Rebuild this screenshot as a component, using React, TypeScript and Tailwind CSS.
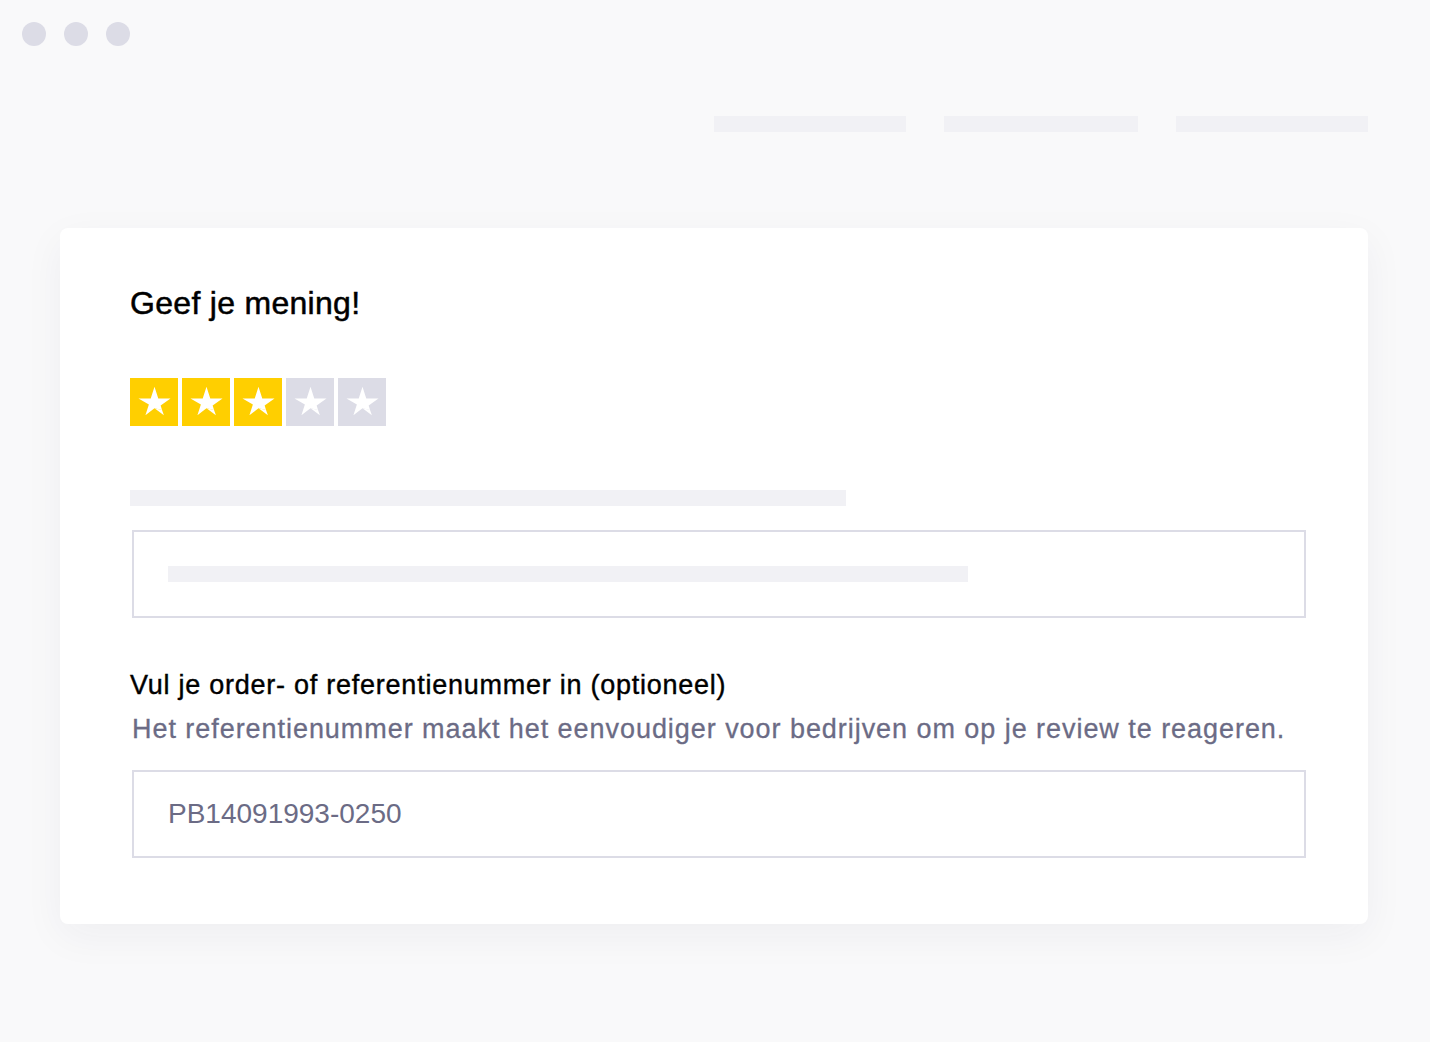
import React from "react";

const font = { fontFamily: '"Liberation Sans", Arial, sans-serif' };

function Star({ on }: { on: boolean }) {
  return (
    <div className={`flex h-[48px] w-[48px] items-center justify-center ${on ? "bg-[#ffcf00]" : "bg-[#dcdce6]"}`}>
      <svg width="37" height="37" viewBox="0 0 24 24">
        <path d="M12 1.8 L14.45 9.35 L22.4 9.35 L15.98 14.02 L16.9 16.9 L12 15.8 L6.1 20.2 L8.35 13.35 L1.6 9.35 L9.55 9.35 Z" fill="#ffffff" />
        <path d="M16.9 16.9 L18.1 20.2 L12 15.8 Z" fill="#ffffff" />
      </svg>
    </div>
  );
}

export default function App() {
  return (
    <div className="relative h-[1042px] w-[1430px] overflow-hidden bg-[#f9f9fa]" style={font}>
      <div className="flex gap-[18px] pl-[22px] pt-[22px]">
        <div className="h-[24px] w-[24px] rounded-full bg-[#dcdce6]" />
        <div className="h-[24px] w-[24px] rounded-full bg-[#dcdce6]" />
        <div className="h-[24px] w-[24px] rounded-full bg-[#dcdce6]" />
      </div>
      <div className="mt-[70px] flex justify-end gap-[38px] pr-[62px]">
        <div className="h-[16px] w-[192px] bg-[#f1f1f5]" />
        <div className="h-[16px] w-[194px] bg-[#f1f1f5]" />
        <div className="h-[16px] w-[192px] bg-[#f1f1f5]" />
      </div>
      <div className="ml-[60px] mt-[96px] h-[696px] w-[1308px] rounded-[8px] bg-white pl-[70px] pr-[62px] pt-[55px] shadow-[0_12px_40px_rgba(40,40,80,0.05)]">
        <div className="text-[32px] leading-[40px] tracking-[0.3px] text-[#000000] [-webkit-text-stroke:0.5px_#000000]">
          Geef je mening!
        </div>
        <div className="mt-[55px] flex gap-[4px]">
          <Star on />
          <Star on />
          <Star on />
          <Star on={false} />
          <Star on={false} />
        </div>
        <div className="mt-[64px] h-[16px] w-[716px] bg-[#f1f1f5]" />
        <div className="ml-[2px] mt-[24px] h-[88px] w-[1174px] border-2 border-[#dcdce6] pl-[34px] pt-[34px]">
          <div className="h-[16px] w-[800px] bg-[#f1f1f5]" />
        </div>
        <div className="mt-[51px] text-[27px] leading-[32px] tracking-[0.75px] text-[#000000] [-webkit-text-stroke:0.4px_#000000]">
          Vul je order- of referentienummer in (optioneel)
        </div>
        <div className="ml-[2px] mt-[12px] text-[27px] leading-[32px] tracking-[0.95px] text-[#6b6b85] [-webkit-text-stroke:0.3px_#6b6b85]">
          Het referentienummer maakt het eenvoudiger voor bedrijven om op je review te reageren.
        </div>
        <div className="ml-[2px] mt-[25px] flex h-[88px] w-[1174px] items-center border-2 border-[#dcdce6] pl-[34px]">
          <span className="text-[28px] text-[#6b6b85]">PB14091993-0250</span>
        </div>
      </div>
    </div>
  );
}
